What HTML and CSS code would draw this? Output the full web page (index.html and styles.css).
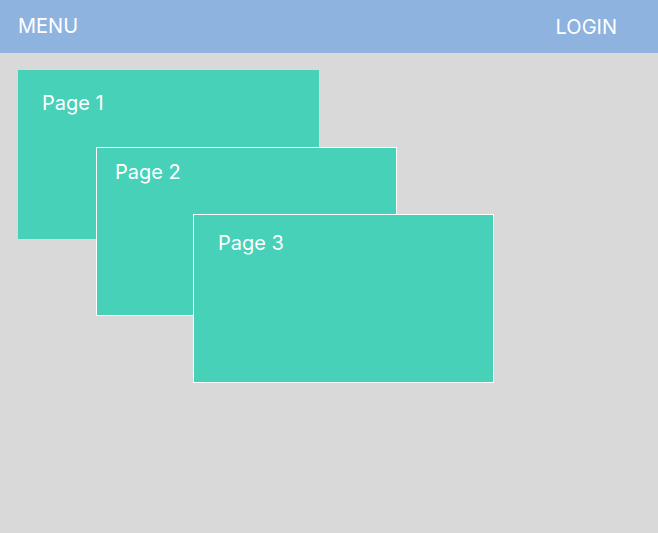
FILE: index.html
```html
<!DOCTYPE html>
<html>
<head>
<meta charset="utf-8">
<link rel="stylesheet" href="styles.css">
</head>
<body>
<header class="topbar">
  <span class="nav-item menu">MENU</span>
  <span class="nav-item login">LOGIN</span>
</header>
<main class="stage">
  <div class="page page-1">Page 1</div>
  <div class="page page-2">Page 2</div>
  <div class="page page-3">Page 3</div>
</main>
</body>
</html>
```
FILE: styles.css
```css
html, body {
  margin: 0;
  padding: 0;
}
body {
  width: 658px;
  height: 533px;
  background: #d9d9d9;
  font-family: Inter, "Noto Sans", "Liberation Sans", sans-serif;
  color: #ffffff;
  overflow: hidden;
}
.topbar {
  height: 53px;
  box-sizing: border-box;
  background: #8eb3df;
  display: flex;
  justify-content: space-between;
  align-items: flex-start;
  padding: 14px 41px 0 18px;
}
.nav-item {
  font-size: 20px;
  line-height: 24px;
  font-weight: 400;
}
.login {
  margin-top: 1px;
}
.stage {
  position: relative;
  height: 480px;
}
.page {
  position: absolute;
  width: 301px;
  height: 169px;
  box-sizing: border-box;
  background: #47d1b8;
  font-size: 20px;
  line-height: 24px;
}
.page-1 {
  left: 18px;
  top: 17px;
  padding: 21px 0 0 24px;
}
.page-2 {
  left: 96px;
  top: 94px;
  border: 1px solid #ffffff;
  padding: 12px 0 0 18px;
}
.page-3 {
  left: 193px;
  top: 161px;
  border: 1px solid #ffffff;
  padding: 16px 0 0 24px;
}
```
